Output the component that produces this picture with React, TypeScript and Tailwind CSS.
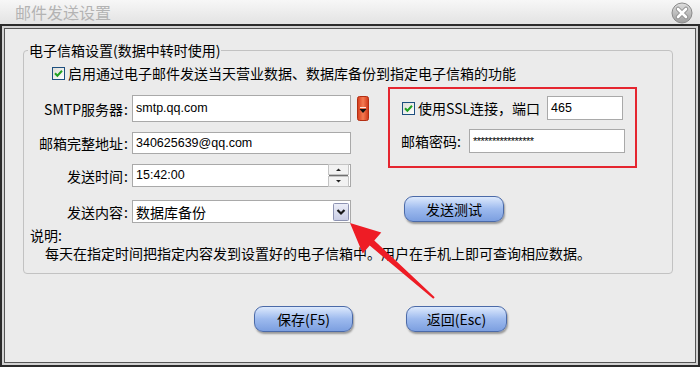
import React from "react";

const cjk = "font-['Noto_Sans_CJK_SC','Noto_Sans',sans-serif]";
const latin = "font-['Liberation_Sans',Arial,sans-serif]";

const CheckBox = () => (
  <svg width="13" height="13" viewBox="0 0 13 13" className="shrink-0">
    <defs>
      <linearGradient id="cbg" x1="0" y1="0" x2="1" y2="1">
        <stop offset="0" stopColor="#dcdcd6" />
        <stop offset="1" stopColor="#ffffff" />
      </linearGradient>
    </defs>
    <rect x="0.5" y="0.5" width="12" height="12" fill="url(#cbg)" stroke="#1d4f7f" />
    <path d="M3 6.2 L5.4 8.7 L10 3.8" fill="none" stroke="#21a121" strokeWidth="2" />
  </svg>
);

const CloseButton = () => (
  <svg width="22" height="22" viewBox="0 0 22 22">
    <defs>
      <linearGradient id="cls" x1="0" y1="0" x2="0" y2="1">
        <stop offset="0" stopColor="#dedede" />
        <stop offset="1" stopColor="#9d9d9d" />
      </linearGradient>
    </defs>
    <circle cx="11" cy="11" r="10" fill="url(#cls)" stroke="#8a8a8a" />
    <path d="M7 7 L15 15 M15 7 L7 15" stroke="#8c8c8c" strokeWidth="4.5" strokeLinecap="round" />
    <path d="M7 7 L15 15 M15 7 L7 15" stroke="#ffffff" strokeWidth="2.6" strokeLinecap="round" />
  </svg>
);

const OrangeDrop = () => (
  <svg width="12" height="25" viewBox="0 0 12 25" className="shrink-0">
    <defs>
      <linearGradient id="org" x1="0" y1="0" x2="1" y2="0">
        <stop offset="0" stopColor="#d33a1a" />
        <stop offset="0.5" stopColor="#f47b52" />
        <stop offset="1" stopColor="#cf3617" />
      </linearGradient>
    </defs>
    <rect x="0.5" y="0.5" width="11" height="24" rx="2" fill="url(#org)" stroke="#b32e12" />
    <line x1="3" y1="11.5" x2="9" y2="11.5" stroke="#ffe9e0" />
    <path d="M2.5 13 L9.5 13 L6 17 Z" fill="#111" />
  </svg>
);

const Spinner = () => (
  <svg width="21" height="23" viewBox="0 0 21 23" className="shrink-0">
    <rect x="0.5" y="0.5" width="20" height="10" fill="#f2f2f2" stroke="#c4c4c4" />
    <rect x="0.5" y="12.5" width="20" height="10" fill="#f2f2f2" stroke="#c4c4c4" />
    <line x1="1" y1="11.5" x2="20" y2="11.5" stroke="#6f6f6f" />
    <path d="M8 7 L13 7 L10.5 4.5 Z" fill="#222" />
    <path d="M8 16 L13 16 L10.5 18.5 Z" fill="#222" />
  </svg>
);

const ComboButton = () => (
  <svg width="16" height="18" viewBox="0 0 16 18" className="shrink-0">
    <defs>
      <linearGradient id="cmb" x1="0" y1="0" x2="0" y2="1">
        <stop offset="0" stopColor="#eceef8" />
        <stop offset="1" stopColor="#c9cde4" />
      </linearGradient>
    </defs>
    <rect x="0.5" y="0.5" width="15" height="17" rx="1" fill="url(#cmb)" stroke="#8d93b2" />
    <path d="M4.5 7 L8 10.5 L11.5 7" fill="none" stroke="#1a1a1a" strokeWidth="2.2" />
  </svg>
);

const Field = ({ w, h, children }: { w: string; h: string; children?: React.ReactNode }) => (
  <div className={`${w} ${h} flex items-center bg-white border border-[#a9a9a9] pl-[3px] pr-[1px] shrink-0`}>
    {children}
  </div>
);

const GlossButton = ({ label, w }: { label: string; w: string }) => (
  <button
    className={`${w} h-[26px] rounded-[9px] border border-[#4b6aa8] bg-linear-to-b from-[#dde9fc] via-[#9dbaee] to-[#7c9fe0] shadow-[1px_2px_2px_rgba(0,0,0,0.35)] text-[14px] leading-none text-black flex items-center justify-center`}
  >
    {label}
  </button>
);

// label right aligned against its input, colon kept close to the text
const Label = ({ text }: { text: string }) => (
  <span className="w-[107px] flex justify-end leading-[20px]">
    {text}
    <span className="inline-block w-[8px] pl-[1px] text-left">:</span>
  </span>
);

export default function App() {
  return (
    <div className={`relative w-[700px] h-[367px] flex flex-col bg-[#ebebeb] text-black text-[14px] overflow-hidden ${cjk}`}>
      {/* Title bar */}
      <div className="h-[24px] shrink-0 flex items-center justify-between pl-[15px] pr-[7px] bg-linear-to-b from-[#f7f7f7] to-[#e3e3e3]">
        <span className="text-[16px] leading-none text-[#b3b3b3]">邮件发送设置</span>
        <div className="mt-[2px]">
          <CloseButton />
        </div>
      </div>

      {/* Window frame */}
      <div className="flex-1 flex border-2 border-[#2b2b2b] bg-[#d2d2d2] p-[2px]">
        <div className="flex-1 flex flex-col border border-[#555] bg-[#ebebeb]">
          <fieldset className="ml-[18px] mt-[11px] w-[650px] h-[234px] border border-[#c2c2c2] rounded-[4px]">
            <legend className="ml-[4px] px-[1px] leading-[20px]">电子信箱设置(数据中转时使用)</legend>

            <div className="mt-[3px] h-[20px] flex items-center pl-[28px] gap-[3px]">
              <CheckBox />
              <span className="leading-[20px]">启用通过电子邮件发送当天营业数据、数据库备份到指定电子信箱的功能</span>
            </div>

            <div className="mt-[4px] flex">
              {/* Left form */}
              <div className="w-[345px] flex flex-col">
                <div className="mt-[8px] h-[27px] flex items-center">
                  <Label text="SMTP服务器" />
                  <div className="ml-[1px]">
                    <Field w="w-[219px]" h="h-[27px]">
                      <span className={`${latin} text-[12.5px]`}>smtp.qq.com</span>
                    </Field>
                  </div>
                  <div className="ml-[6px]">
                    <OrangeDrop />
                  </div>
                </div>
                <div className="mt-[10px] h-[22px] flex items-center">
                  <Label text="邮箱完整地址" />
                  <div className="ml-[1px]">
                    <Field w="w-[219px]" h="h-[22px]">
                      <span className={`${latin} text-[12.5px]`}>340625639@qq.com</span>
                    </Field>
                  </div>
                </div>
                <div className="mt-[10px] h-[23px] flex items-center">
                  <Label text="发送时间" />
                  <div className="ml-[1px]">
                    <Field w="w-[219px]" h="h-[23px]">
                      <span className={`${latin} text-[12.5px] flex-1`}>15:42:00</span>
                      <Spinner />
                    </Field>
                  </div>
                </div>
                <div className="mt-[13px] h-[23px] flex items-center">
                  <Label text="发送内容" />
                  <div className="ml-[1px]">
                    <Field w="w-[219px]" h="h-[23px]">
                      <span className="flex-1 leading-[20px]">数据库备份</span>
                      <ComboButton />
                    </Field>
                  </div>
                </div>
              </div>

              {/* Right column */}
              <div className="ml-[19px] flex flex-col">
                <div className="w-[249px] h-[81px] border-2 border-[#e5252f] flex flex-col pl-[11px] pt-[7px]">
                  <div className="h-[24px] flex items-center pr-[12px]">
                    <div className="ml-[1px]">
                      <CheckBox />
                    </div>
                    <span className="ml-[3px] leading-[20px]">使用SSL连接，端口</span>
                    <div className="ml-auto">
                      <Field w="w-[76px]" h="h-[24px]">
                        <span className={`${latin} text-[12.5px]`}>465</span>
                      </Field>
                    </div>
                  </div>
                  <div className="mt-[9px] h-[24px] flex items-center pr-[10px]">
                    <span className="leading-[20px]">邮箱密码:</span>
                    <div className="ml-auto">
                      <Field w="w-[156px]" h="h-[24px]">
                        <span className={`${latin} text-[11px] leading-none self-start mt-[6px] tracking-[-0.5px]`}>****************</span>
                      </Field>
                    </div>
                  </div>
                </div>
                <div className="mt-[28px] ml-[16px]">
                  <GlossButton label="发送测试" w="w-[100px]" />
                </div>
              </div>
            </div>

            <div className="mt-[3px] pl-[6px] leading-[18px]">说明:</div>
            <div className="pl-[21px] leading-[18px]">
              每天在指定时间把指定内容发到设置好的电子信箱中。用户在手机上即可查询相应数据。
            </div>
          </fieldset>

          <div className="mt-[32px] ml-[249px] flex gap-[53px]">
            <GlossButton label="保存(F5)" w="w-[99px]" />
            <GlossButton label="返回(Esc)" w="w-[101px]" />
          </div>
        </div>
      </div>

      {/* Red annotation arrow */}
      <svg className="absolute inset-0 pointer-events-none" width="700" height="367" viewBox="0 0 700 367">
        <polygon
          points="350,223 381.3,232.6 374.3,240.4 434.7,297.3 433.3,298.7 369.7,245.6 362.7,253.4"
          fill="#ee1c25"
        />
      </svg>
    </div>
  );
}
